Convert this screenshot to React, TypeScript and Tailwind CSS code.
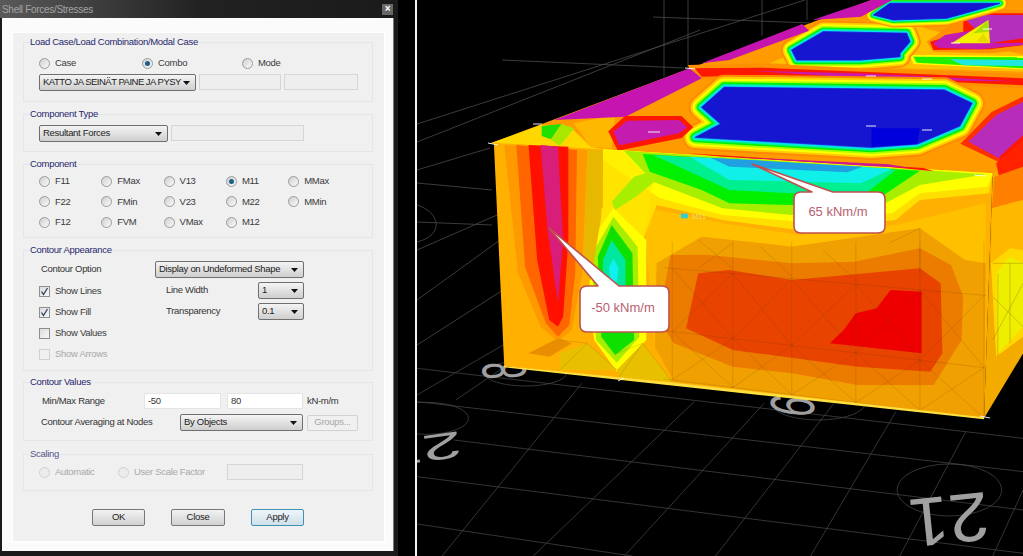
import type { ReactNode } from 'react'

function Radio({ label, on, off, cls }: { label?: string; on?: boolean; off?: boolean; cls?: string }) {
  return (
    <div className={`flex items-center gap-[5px] ${cls ?? ''}`}>
      <span
        className={`flex h-[11px] w-[11px] shrink-0 items-center justify-center rounded-full border ${
          off ? 'border-[#d0d0d0] bg-[#ececec]' : 'border-[#9a9a9a] bg-gradient-to-br from-[#cfcfcf] to-[#fbfbfb]'
        }`}
      >
        {on && <span className="h-[5px] w-[5px] rounded-full bg-[#1d5f86]" />}
      </span>
      <span className={off ? 'text-[#a8a8a8]' : 'text-[#3a3a3a]'}>{label}</span>
    </div>
  )
}

function Check({ label, on, off }: { label: string; on?: boolean; off?: boolean }) {
  return (
    <div className="flex h-[21px] items-center gap-[5px]">
      <span
        className={`flex h-[11px] w-[11px] items-center justify-center border ${
          off ? 'border-[#d0d0d0] bg-[#f0f0f0]' : 'border-[#8e8e8e] bg-gradient-to-br from-[#dcdcdc] to-[#f8f8f8]'
        }`}
      >
        {on && (
          <svg width="9" height="9" viewBox="0 0 9 9">
            <path d="M1.5 4.5 L3.5 7.5 L7.5 1" fill="none" stroke="#33425f" strokeWidth="1.3" />
          </svg>
        )}
      </span>
      <span className={off ? 'text-[#a8a8a8]' : 'text-[#3a3a3a]'}>{label}</span>
    </div>
  )
}

function Select({ value, cls }: { value: string; cls: string }) {
  return (
    <div
      className={`flex h-[17px] items-center justify-between rounded-[2px] border border-[#6f6f6f] bg-gradient-to-b from-[#f4f4f4] to-[#cfcfcf] pl-[3px] pr-[5px] text-[#222] ${cls}`}
    >
      <span className="whitespace-nowrap">{value}</span>
      <svg width="7" height="4" viewBox="0 0 7 4" className="shrink-0">
        <polygon points="0,0 7,0 3.5,4" fill="#111" />
      </svg>
    </div>
  )
}

function Field({ value, cls, white }: { value?: string; cls: string; white?: boolean }) {
  return (
    <div
      className={`flex h-[16px] items-center border px-[3px] text-[#333] ${
        white ? 'border-[#e4e4e4] bg-white' : 'border-[#d6d6d6] bg-[#eeeeee]'
      } ${cls}`}
    >
      {value}
    </div>
  )
}

function Group({ title, cls, off, children }: { title: string; cls: string; off?: boolean; children: ReactNode }) {
  return (
    <fieldset className={`w-[350px] border border-[#e6e6e6] ${cls}`}>
      <legend className={`ml-[6px] h-[12px] leading-[12px] ${off ? 'text-[#55558a]' : 'text-[#27276e]'}`}>{title}</legend>
      {children}
    </fieldset>
  )
}

function Btn({ label, cls }: { label: string; cls: string }) {
  return (
    <div
      className={`flex h-[17px] items-center justify-center rounded-[2px] border bg-gradient-to-b text-[#222] ${cls}`}
    >
      {label}
    </div>
  )
}

function Dialog() {
  return (
    <div className="flex h-[556px] w-[398px] shrink-0 flex-col bg-[#1b1b1b] font-['Liberation_Sans',sans-serif] text-[9.5px] tracking-[-0.3px]">
      <div className="flex h-[18px] items-center justify-between bg-gradient-to-r from-[#5a5a5a] via-[#222] to-[#1a1a1a] pl-[2px] pr-[5px] text-[10px] text-[#a4a4a4]">
        <span>Shell Forces/Stresses</span>
        <span className="flex h-[11px] w-[11px] items-center justify-center bg-[#666] text-[10px] font-bold leading-none text-white">×</span>
      </div>
      <div className="ml-[2px] h-[533px] w-[392px] border-r border-[#777] bg-[#fbfbfb] pl-[10px] pt-[14px]">
        <div className="h-[510px] w-[373px] border border-[#fff] bg-[#f0f0f0] pl-[10px] pt-[3px]">
          <Group title="Load Case/Load Combination/Modal Case" cls="h-[66px]">
            <div className="flex h-[16px] items-center pl-[15px] mt-[7px]">
              <Radio label="Case" cls="w-[103px]" />
              <Radio label="Combo" on cls="w-[100px]" />
              <Radio label="Mode" />
            </div>
            <div className="mt-[3px] flex gap-[3px] pl-[15px]">
              <Select value="KATTO JA SEINÄT PAINE JA PYSY" cls="w-[157px] tracking-[-0.5px]" />
              <Field cls="w-[82px]" />
              <Field cls="w-[74px]" />
            </div>
          </Group>
          <Group title="Component Type" cls="mt-[6px] h-[44px]">
            <div className="mt-[5px] flex gap-[3px] pl-[15px]">
              <Select value="Resultant Forces" cls="w-[129px]" />
              <Field cls="w-[133px]" />
            </div>
          </Group>
          <Group title="Component" cls="mt-[6px] h-[80px]">
            <div className="grid grid-cols-[62.3px_62.3px_62.3px_62.3px_62.3px] auto-rows-[20.5px] items-center pl-[15px] pt-[1px]">
              <Radio label="F11" />
              <Radio label="FMax" />
              <Radio label="V13" />
              <Radio label="M11" on />
              <Radio label="MMax" />
              <Radio label="F22" />
              <Radio label="FMin" />
              <Radio label="V23" />
              <Radio label="M22" />
              <Radio label="MMin" />
              <Radio label="F12" />
              <Radio label="FVM" />
              <Radio label="VMax" />
              <Radio label="M12" />
            </div>
          </Group>
          <Group title="Contour Appearance" cls="mt-[6px] h-[127px]">
            <div className="mt-[5px] flex items-center pl-[17px]">
              <span className="w-[114px] text-[#333]">Contour Option</span>
              <Select value="Display on Undeformed Shape" cls="w-[149px]" />
            </div>
            <div className="mt-[3px] flex pl-[15px]">
              <div className="w-[127px]">
                <Check label="Show Lines" on />
                <Check label="Show Fill" on />
                <Check label="Show Values" />
                <Check label="Show Arrows" off />
              </div>
              <div className="flex w-[138px] flex-col gap-[4px] pt-[1px] text-[#333]">
                <div className="flex items-center justify-between">
                  <span>Line Width</span>
                  <Select value="1" cls="w-[46px]" />
                </div>
                <div className="flex items-center justify-between">
                  <span>Transparency</span>
                  <Select value="0.1" cls="w-[46px]" />
                </div>
              </div>
            </div>
          </Group>
          <Group title="Contour Values" cls="mt-[5px] h-[65px]">
            <div className="mt-[5px] flex items-center pl-[18px] text-[#333]">
              <span className="w-[102px]">Min/Max Range</span>
              <Field value="-50" white cls="w-[77px]" />
              <Field value="80" white cls="ml-[6px] w-[76px]" />
              <span className="ml-[4px]">kN-m/m</span>
            </div>
            <div className="mt-[5px] flex items-center pl-[17px] text-[#333]">
              <span className="w-[139px]">Contour Averaging at Nodes</span>
              <Select value="By Objects" cls="w-[123px]" />
              <div className="ml-[4px] flex h-[16px] w-[51px] items-center justify-center rounded-[2px] border border-[#d2d2d2] text-[#a8a8a8]">Groups...</div>
            </div>
          </Group>
          <Group title="Scaling" off cls="mt-[7px] h-[43px]">
            <div className="mt-[4px] flex items-center pl-[15px]">
              <Radio label="Automatic" off cls="w-[79px]" />
              <Radio label="User Scale Factor" off cls="w-[109px]" />
              <Field cls="w-[76px]" />
            </div>
          </Group>
          <div className="ml-[69px] mt-[18px] flex">
            <Btn label="OK" cls="w-[53px] border-[#777] from-[#f2f2f2] to-[#d2d2d2]" />
            <Btn label="Close" cls="ml-[26px] w-[54px] border-[#777] from-[#f2f2f2] to-[#d2d2d2]" />
            <Btn label="Apply" cls="ml-[26px] w-[53px] border-[#3f92b4] from-[#eef6fa] to-[#cfe0e8]" />
          </div>
        </div>
      </div>
    </div>
  )
}

// concentric contour bands, drawn as strokes of shrinking width
const bands: [string, number][] = [
  ['#ff8a00', 76],
  ['#ffd000', 64],
  ['#ffff00', 52],
  ['#a8ff00', 40],
  ['#00f000', 30],
  ['#00f0a0', 20],
  ['#00e8f0', 12],
  ['#2090f0', 5],
]

function Cell({ points, k = 1 }: { points: string; k?: number }) {
  return (
    <>
      {bands.map(([c, w]) => (
        <polygon key={c} points={points} fill={c} stroke={c} strokeWidth={w * k} strokeLinejoin="round" />
      ))}
      <polygon points={points} fill="#1616d0" stroke="#1616d0" strokeWidth="2" strokeLinejoin="round" />
    </>
  )
}

function FrontMesh() {
  const xs = [555, 730, 900, 1085, 1270, 1455]
  const row = (y: number, k: number, x: number) => y + (x - 555) * k
  const rows: [number, number][] = [
    [385, 0.09],
    [575, 0.12],
    [720, 0.128],
  ]
  return (
    <g stroke="#5a3000" strokeOpacity="0.3" strokeWidth="1.6" fill="none">
      {xs.map((x) => (
        <line key={x} x1={x} y1={305} x2={x} y2={row(722, 0.128, x)} />
      ))}
      {rows.map(([y, k]) => (
        <line key={y} x1={530} y1={row(y, k, 530)} x2={1460} y2={row(y, k, 1460)} />
      ))}
      {xs.slice(0, -1).map((x, i) => {
        const n = xs[i + 1]
        return rows.slice(0, -1).map(([y, k], j) => {
          const [y2, k2] = rows[j + 1]
          return (
            <g key={`${x}-${j}`}>
              <line x1={x} y1={row(y, k, x)} x2={n} y2={row(y2, k2, n)} />
              <line x1={n} y1={row(y, k, n)} x2={x} y2={row(y2, k2, x)} />
            </g>
          )
        })
      })}
      <path d="M230 600 L310 610 L395 690 M230 690 L310 610 M395 640 L470 610 L555 725 M395 720 L470 610" />
      <path d="M630 300 L730 385 M730 310 L630 385 M810 320 L900 410 M990 330 L1085 420 M1180 310 L1270 265 L1270 400" />
    </g>
  )
}

function Viewport() {
  return (
    <svg viewBox="417 0 606 556" className="h-[556px] w-[606px] shrink-0 bg-black">
      {/* floor, behind and in front of the box */}
      <g transform="translate(415 340) scale(0.3878 0.3333)" stroke="#484848" strokeWidth="2" fill="none">
        <path d="M5 85 L1568 295 M5 185 L1568 395 M100 300 L1568 510 M5 410 L1568 640 M5 552 L560 648" />
        <path d="M5 165 L235 10 M105 180 L225 85 M70 648 L430 130 M305 648 L720 185 M540 648 L900 190 M775 648 L1080 190 M1020 648 L1240 215 M1250 648 L1420 275 M1490 648 L1568 450" />
        <ellipse cx="285" cy="100" rx="105" ry="38" />
        <ellipse cx="1040" cy="190" rx="120" ry="50" />
        <ellipse cx="30" cy="235" rx="108" ry="48" />
        <ellipse cx="1378" cy="450" rx="135" ry="78" />
      </g>
      <g stroke="#4a4a4a" strokeWidth="0.8" fill="none">
        <path d="M664 0 L664 77 M688 0 L688 68 M762 0 L762 36 M807 0 L807 20" />
        <path d="M502 60 L684 68 M653 17 L810 23 M417 124 L805 0 M417 142 L700 30 M417 170 L490 148" />
        <path d="M417 183 L492 190 M417 222 L492 225 M417 250 L497 215 M417 300 L500 240 M417 345 L503 290" />
        <path d="M417 205 C440 212 445 235 417 242" />
      </g>
      <g fill="#a0a0a0" fontFamily="'Liberation Sans', sans-serif">
        <text transform="translate(505 370) rotate(-94) scale(0.55 1.05)" y="20" fontSize="60" textAnchor="middle">8</text>
        <text transform="translate(793 406) rotate(-82) scale(0.6 1.05)" y="20" fontSize="60" textAnchor="middle">6</text>
        <text transform="translate(460 431) rotate(172) scale(1.2 0.62)" fontSize="60">27</text>
        <text transform="translate(949 520) rotate(174) scale(1.2 1.15)" y="21" fontSize="60" textAnchor="middle">21</text>
      </g>

      {/* top face */}
      <g transform="translate(480 0) scale(0.3464 0.3333)">
        <polygon points="30,430 1130,0 1568,0 1568,525 1480,530 390,456" fill="#ff9a00" />
        <polygon points="30,430 175,375 260,380 320,440 380,452" fill="#ffd800" />
        <polygon points="178,378 235,372 205,418 178,408" fill="#20e000" />
        <polygon points="235,372 272,385 230,438 205,420" fill="#a8e800" />
        <polygon points="270,370 390,345 380,445 320,440" fill="#ffb800" />
      </g>

      {/* back cells, traced from the upper right corner */}
      <g transform="translate(760 0) scale(0.3333)">
        <polygon points="340,0 789,0 789,40 660,40 560,70 400,75" fill="#ff9a00" />
        <polygon points="330,60 480,80 789,165 789,215 400,205 30,190" fill="#ffc000" />
        <polygon points="450,165 789,168 789,208 460,192" fill="#ffff00" />
        <polygon points="460,170 789,172 789,205 470,188" fill="#20f000" />
        <polygon points="570,178 789,180 789,198 610,196" fill="#20e8e0" />
        <Cell k={0.85} points="95,150 190,95 440,100 450,125 420,160 420,170 300,180 110,180" />
        <polygon points="600,55 660,30 789,30 789,150 690,160 520,155 500,125" fill="#ff9000" />
        <polygon points="610,60 660,40 789,40 789,135 690,148 520,150 510,125 610,95" fill="#ff1800" />
        <polygon points="620,62 665,45 789,45 789,115 690,130" fill="#b430bc" />
        <polygon points="520,130 555,105 630,92 690,130 789,128 789,135 660,148 535,143" fill="#c41cb0" />
        <polygon points="575,130 685,60 690,130" fill="#f4f000" />
        <polygon points="640,100 685,60 688,95" fill="#a8e000" />
        <polygon points="650,125 670,100 688,128" fill="#e8d800" />
        <Cell k={0.6} points="340,45 390,10 720,10 650,30 560,55 400,60" />
      </g>

      <g transform="translate(480 0) scale(0.3464 0.3333)">
        {/* red ridge between the cells */}
        <polygon points="600,195 808,190 1100,205 1568,222 1568,265 1100,245 808,235 620,240" fill="#ff9000" />
        <polygon points="620,205 808,203 1100,215 1568,235 1568,256 1100,235 808,225 640,230" fill="#ff1800" />
        <polygon points="780,212 1090,220 1270,228 1560,245 1280,240 1100,235" fill="#cc1aa8" />
        <Cell points="622,412 695,372 640,322 705,262 1340,270 1420,310 1385,378 1262,432 1130,442" />
        <polygon points="1130,385 1270,385 1262,432 1130,440" fill="#0000dc" />
        {/* magenta edge pieces */}
        <polygon points="215,360 605,205 640,235 420,350" fill="#c514b0" />
        <polygon points="640,190 930,72 950,92 720,180" fill="#c514b0" />
        <polygon points="960,60 1130,0 1190,0 1100,50" fill="#c514b0" />
        <polygon points="375,395 420,352 580,352 610,382 580,410 400,448" fill="#ff1800" stroke="#ff1800" strokeWidth="8" />
        <polygon points="385,395 425,362 575,360 598,382 575,400 402,436" fill="#c41cae" />
        <polygon points="1395,430 1480,340 1568,295 1568,430 1500,482" fill="#ff3000" stroke="#ff3000" strokeWidth="10" />
        <polygon points="1410,425 1490,345 1568,305 1568,415 1498,475" fill="#b82cba" />
        <polygon points="1500,470 1568,405 1568,490 1500,495" fill="#ff1800" />
      </g>

      {/* front face */}
      <g transform="translate(480 140) scale(0.3464 0.3333)">
        <polygon points="40,8 1480,100 1455,835 70,678" fill="#ffb000" />
        <polygon points="470,200 700,250 920,285 1200,255 1460,190 1460,370 1400,360 1270,265 900,320 640,290 510,370 505,620" fill="#ffc000" />
        <polygon points="355,28 1480,100 1470,160 1270,180 1200,240 920,270 700,240 510,195 470,300 465,610 395,690 330,600 300,300 355,200" fill="#ffdf00" />
        <polygon points="355,28 1480,100 1465,140 1270,160 1190,220 920,245 700,225 520,175 440,120 355,60" fill="#ffff00" />
        <polygon points="415,32 1270,90 1460,103 1270,135 1170,190 900,225 700,205 500,125" fill="#a8ee00" />
        <polygon points="470,42 1270,92 1130,190 900,195 720,190 640,150 490,95" fill="#00f000" />
        <polygon points="500,45 1200,90 1120,155 900,160 720,150" fill="#00f090" />
        <polygon points="605,50 1190,86 1100,130 720,120" fill="#10f0e8" />
        <polygon points="665,53 1105,80 1060,97 720,80" fill="#20a0e0" />
        <polygon points="600,40 1280,84 1310,94 1150,78 700,50" fill="#ff1800" />
        <polygon points="720,50 1180,73 1240,83 1120,78" fill="#cc1a90" />
        <polygon points="355,25 355,200 300,300 330,600 395,690 465,610 470,310 500,130 415,35" fill="#ffe800" opacity="0.6" />

        {/* diagonal green arm and leaf */}
        <polygon points="380,185 445,110 490,95 510,120 450,170 390,210" fill="#a8ee00" />
        <polygon points="385,205 480,300 480,600 395,695 330,600 300,330" fill="#ffff00" />
        <polygon points="385,230 455,320 460,590 395,668 335,600 322,345" fill="#a8ee00" />
        <polygon points="380,255 440,340 445,600 390,645 350,590 340,350" fill="#10e000" />
        <polygon points="380,300 420,360 420,440 385,470 355,430 355,360" fill="#00e8a0" />
        <polygon points="385,355 400,385 395,425 378,425 372,385" fill="#10f0f0" />

        {/* left stripes */}
        <polygon points="310,30 330,32 320,400 300,560 230,640 130,620 120,400 70,15" fill="#ffb000" />
        <polygon points="70,15 310,30 295,400 265,570 225,605 175,560 110,400" fill="#ff9900" />
        <polygon points="105,15 280,30 275,400 258,555 225,590 190,550 130,380" fill="#ff6600" />
        <polygon points="140,15 255,20 255,300 240,530 225,560 200,540 165,360" fill="#ff1000" />
        <polygon points="175,15 225,20 240,300 225,490 195,270" fill="#d81e78" />
        <polygon points="310,30 355,32 350,230 320,420 298,400" fill="#e8b800" />
        <polygon points="140,640 225,595 265,610 200,650" fill="#e88e00" />
        <polygon points="230,690 230,640 310,610 395,690" fill="#e8c000" />
        <polygon points="395,690 470,610 555,725 405,712" fill="#e8c000" />

        {/* lower pressure zones */}
        <polygon points="510,370 640,290 900,320 1270,265 1400,360 1460,370 1455,835 1280,810 730,745 560,725 505,620" fill="#f0a000" />
        <polygon points="550,345 660,345 900,370 1080,365 1270,325 1360,375 1395,470 1390,600 1310,735 1090,735 900,700 730,680 560,610 515,540" fill="#ec7c00" />
        <polygon points="630,400 720,390 900,420 1270,385 1330,430 1335,640 1300,695 1090,680 730,630 595,565" fill="#e84400" />
        <polygon points="1185,450 1275,455 1275,640 1010,610 1050,570 1085,520 1145,505" fill="#ee0000" />

        {/* right face */}
        <polygon points="1480,100 1568,10 1568,640 1455,835" fill="#f4ab00" />
        <polygon points="1490,70 1568,0 1568,85 1498,108" fill="#ff2200" />
        <polygon points="1485,110 1568,80 1568,180 1478,205" fill="#ff8000" />
        <polygon points="1478,205 1568,180 1568,330 1530,330 1475,370" fill="#ffb800" />
        <polygon points="1475,370 1530,325 1568,330 1568,590 1490,650" fill="#ffd800" />
        <polygon points="1490,400 1530,350 1568,370 1568,560 1495,640" fill="#eeee00" />
        <path d="M1480 370 L1568 370 M1495 400 L1495 650 M1530 370 L1530 610 M1480 470 L1568 560 M1568 430 L1480 600" stroke="#806000" strokeOpacity="0.45" strokeWidth="2" fill="none" />

        <FrontMesh />
        <polygon points="70,678 560,728 1455,832 1455,838 70,682" fill="#ffe040" />
        <path d="M580 228 L600 228" stroke="#30d0d0" strokeWidth="14" />
        <text x="612" y="236" fontSize="22" fill="#e8e070" fontFamily="'Liberation Sans', sans-serif">M11</text>
      </g>

      {/* small white node ticks */}
      <g stroke="#ffffff" strokeWidth="1" opacity="0.9">
        <path d="M648 132 L660 132 M866 126 L876 126 M922 130 L932 130 M866 76 L876 76 M922 79 L932 79 M951 43 L960 43 M983 29 L992 29 M685 68 L695 69 M533 124 L542 124 M488 143 L498 145 M974 175 L986 176 M980 416 L990 418 M618 381 L624 378" />
      </g>

      {/* callouts */}
      <g stroke="#c0504d" strokeWidth="1.6" strokeLinejoin="round" fill="#ffffff">
        <path d="M752 164 L812 192 L801 192 Q794 192 794 199 L794 226 Q794 233 801 233 L878 233 Q885 233 885 226 L885 199 Q885 192 878 192 L833 192 Z" />
        <path d="M549 228 L598 286 L587 286 Q580 286 580 293 L580 325 Q580 332 587 332 L662 332 Q669 332 669 325 L669 293 Q669 286 662 286 L619 286 Z" />
      </g>
      <g fill="#b95f70" fontFamily="'Liberation Sans', sans-serif" fontSize="13" textAnchor="middle">
        <text x="838" y="216">65 kNm/m</text>
        <text x="623" y="312">-50 kNm/m</text>
      </g>
    </svg>
  )
}

export default function App() {
  return (
    <div className="flex h-[556px] w-[1023px] overflow-hidden bg-black">
      <Dialog />
      <div className="w-[17px] shrink-0 bg-black" />
      <div className="w-[2px] shrink-0 bg-[#f4f4f4]" />
      <Viewport />
    </div>
  )
}
